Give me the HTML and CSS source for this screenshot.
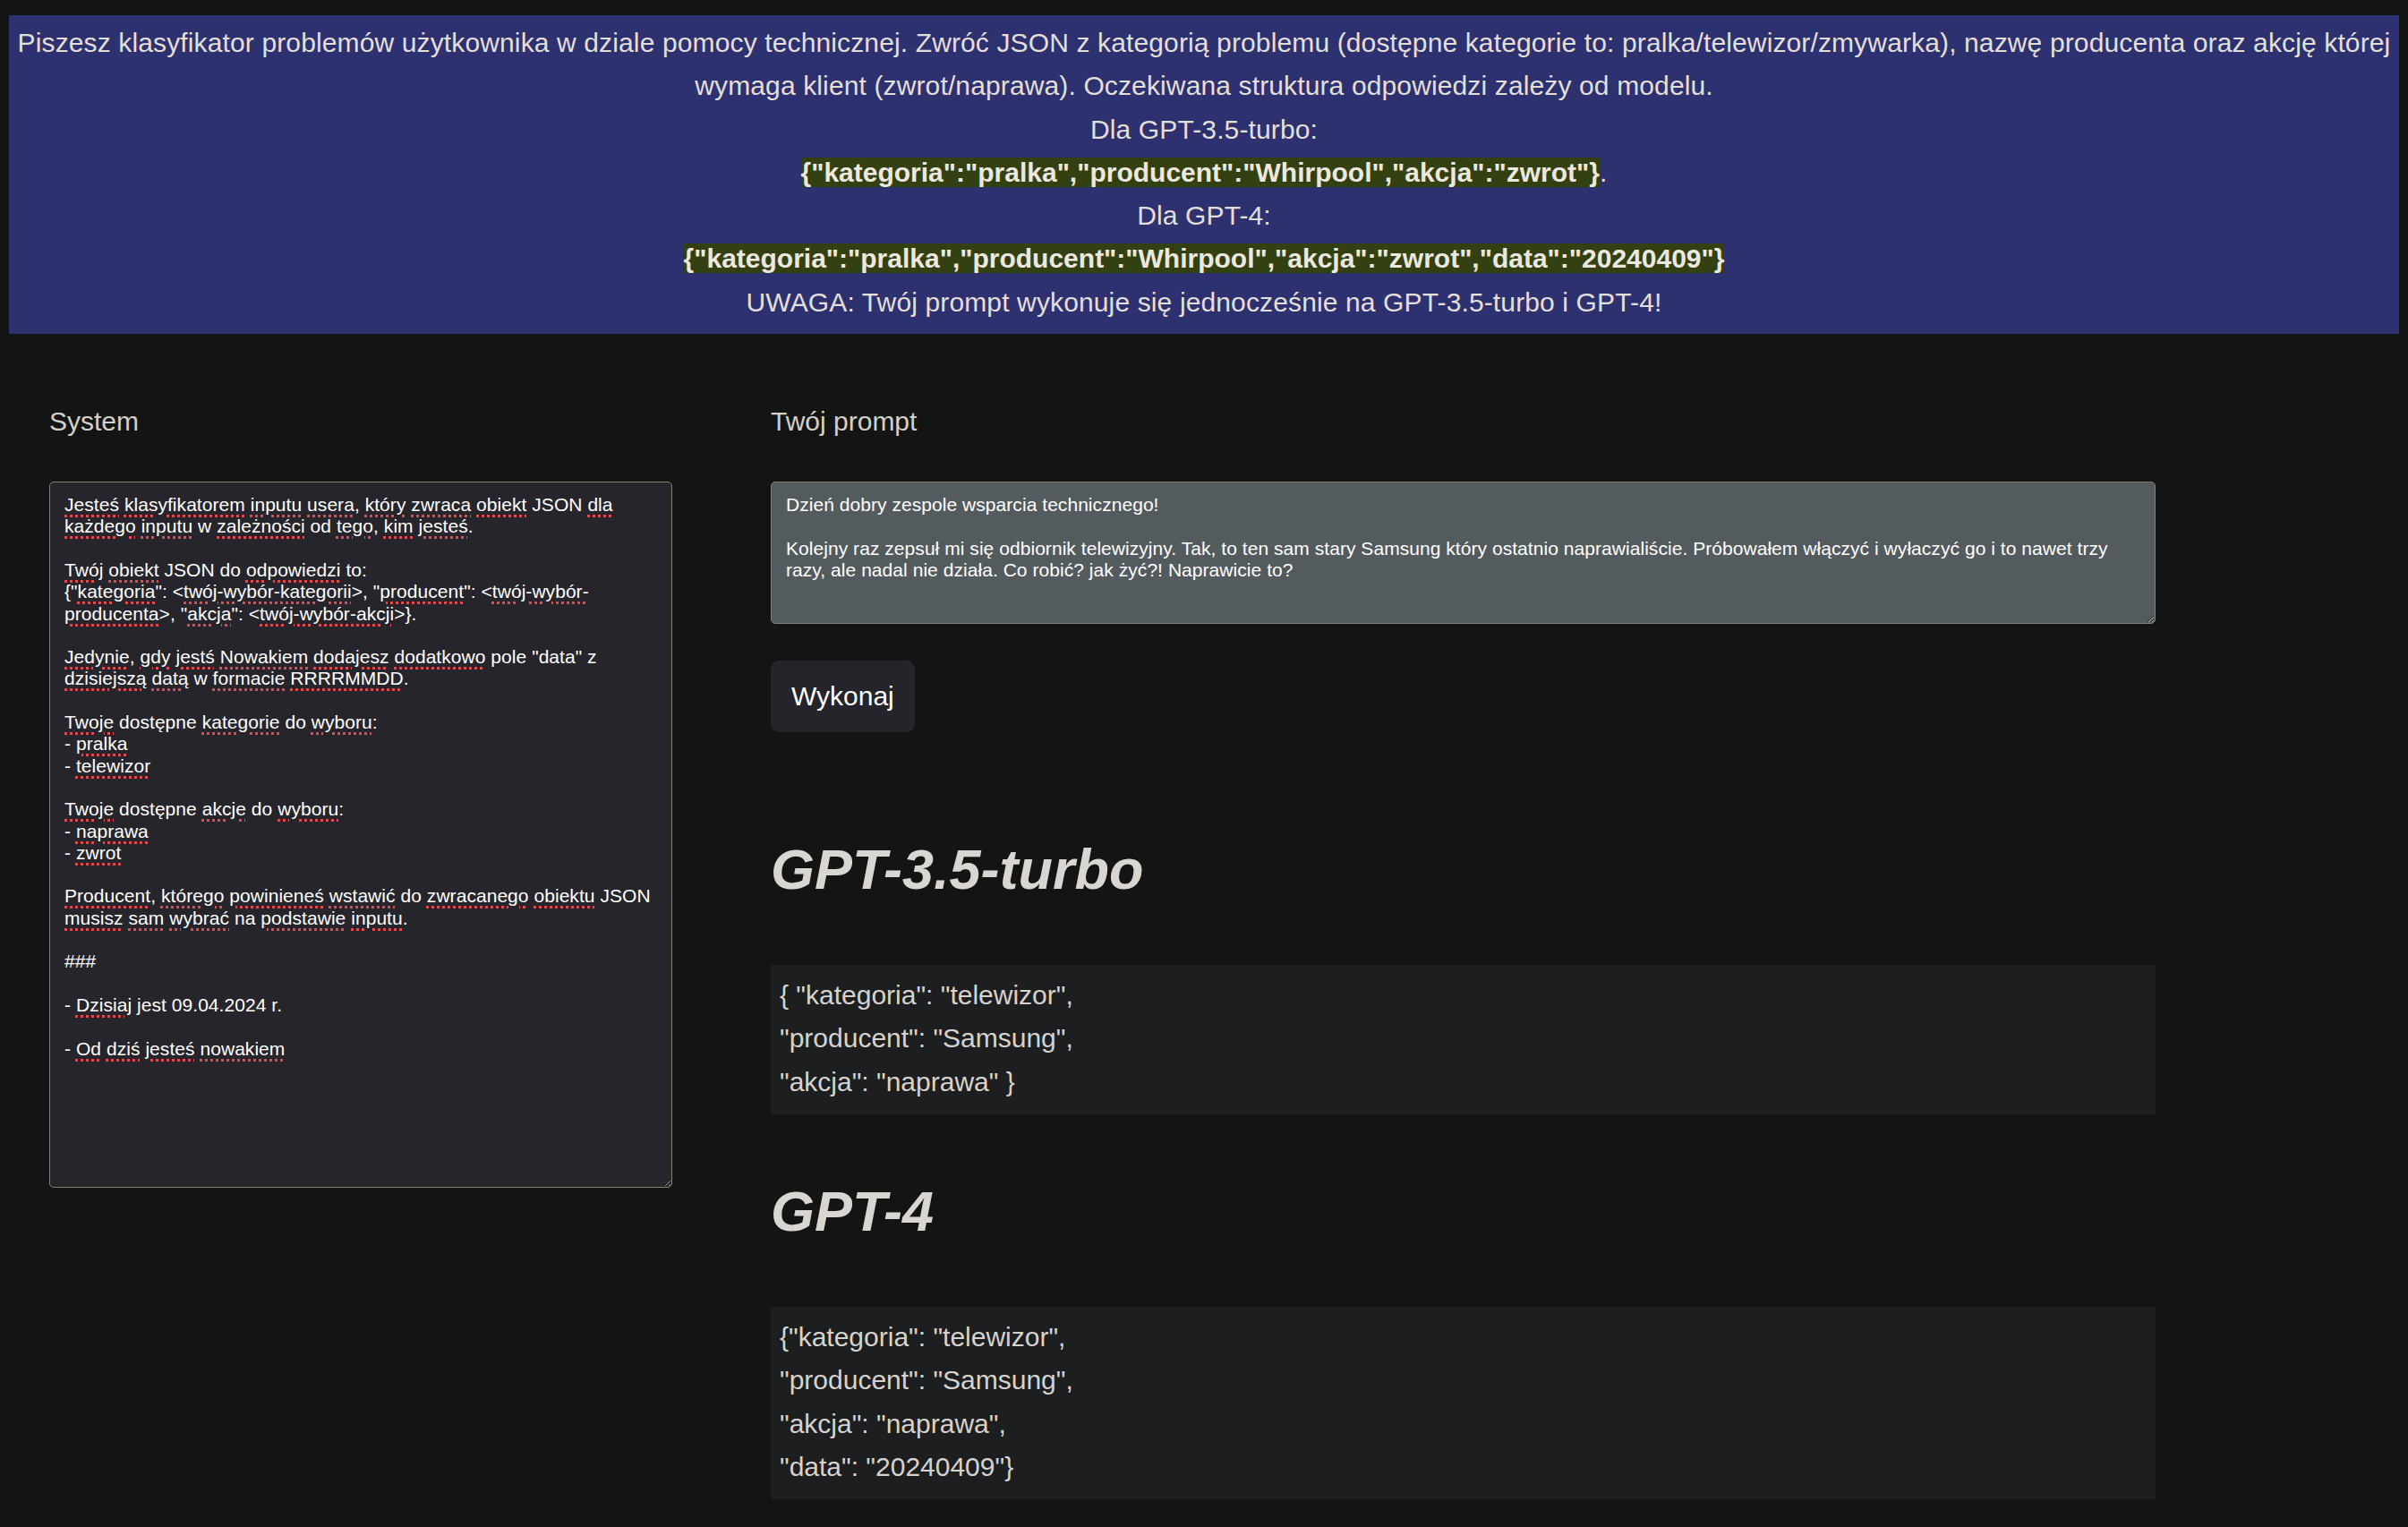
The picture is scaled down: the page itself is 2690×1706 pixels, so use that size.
FILE: index.html
```html
<!DOCTYPE html>
<html lang="pl">
<head>
<meta charset="utf-8">
<title>Klasyfikator</title>
<link rel="stylesheet" href="styles.css">
</head>
<body>
<header class="banner">
<p>Piszesz klasyfikator problemów użytkownika w dziale pomocy technicznej. Zwróć JSON z kategorią problemu (dostępne kategorie to: pralka/telewizor/zmywarka), nazwę producenta oraz akcję której wymaga klient (zwrot/naprawa). Oczekiwana struktura odpowiedzi zależy od modelu.</p>
<p>Dla GPT-3.5-turbo:</p>
<p><code class="hl">{"kategoria":"pralka","producent":"Whirpool","akcja":"zwrot"}</code>.</p>
<p>Dla GPT-4:</p>
<p><code class="hl">{"kategoria":"pralka","producent":"Whirpool","akcja":"zwrot","data":"20240409"}</code></p>
<p>UWAGA: Twój prompt wykonuje się jednocześnie na GPT-3.5-turbo i GPT-4!</p>
</header>
<main class="main">
<section class="col">
<h2 class="label">System</h2>
<div class="textbox sys"><span class="sp">Jesteś</span> <span class="sp">klasyfikatorem</span> <span class="sp">inputu</span> <span class="sp">usera</span>, <span class="sp">który</span> <span class="sp">zwraca</span> <span class="sp">obiekt</span> JSON <span class="sp">dla</span> <span class="sp">każdego</span> <span class="sp">inputu</span> w <span class="sp">zależności</span> od <span class="sp">tego</span>, <span class="sp">kim</span> <span class="sp">jesteś</span>.

<span class="sp">Twój</span> <span class="sp">obiekt</span> JSON do <span class="sp">odpowiedzi</span> to:
{"<span class="sp">kategoria</span>": &lt;<span class="sp">twój-wybór-kategorii</span>&gt;, "<span class="sp">producent</span>": &lt;<span class="sp">twój-wybór-producenta</span>&gt;, "<span class="sp">akcja</span>": &lt;<span class="sp">twój-wybór-akcji</span>&gt;}.

<span class="sp">Jedynie</span>, <span class="sp">gdy</span> <span class="sp">jestś</span> <span class="sp">Nowakiem</span> <span class="sp">dodajesz</span> <span class="sp">dodatkowo</span> pole "data" z <span class="sp">dzisiejszą</span> <span class="sp">datą</span> w <span class="sp">formacie</span> <span class="sp">RRRRMMDD</span>.

<span class="sp">Twoje</span> dostępne <span class="sp">kategorie</span> do <span class="sp">wyboru</span>:
- <span class="sp">pralka</span>
- <span class="sp">telewizor</span>

<span class="sp">Twoje</span> dostępne <span class="sp">akcje</span> do <span class="sp">wyboru</span>:
- <span class="sp">naprawa</span>
- <span class="sp">zwrot</span>

<span class="sp">Producent</span>, <span class="sp">którego</span> <span class="sp">powinieneś</span> <span class="sp">wstawić</span> do <span class="sp">zwracanego</span> <span class="sp">obiektu</span> JSON <span class="sp">musisz</span> <span class="sp">sam</span> <span class="sp">wybrać</span> na <span class="sp">podstawie</span> <span class="sp">inputu</span>.

###

- <span class="sp">Dzisiaj</span> jest 09.04.2024 r.

- <span class="sp">Od</span> <span class="sp">dziś</span> <span class="sp">jesteś</span> <span class="sp">nowakiem</span></div>
</section>
<section class="col">
<h2 class="label">Twój prompt</h2>
<textarea class="textbox prompt" spellcheck="false">Dzień dobry zespole wsparcia technicznego!

Kolejny raz zepsuł mi się odbiornik telewizyjny. Tak, to ten sam stary Samsung który ostatnio naprawialiście. Próbowałem włączyć i wyłaczyć go i to nawet trzy razy, ale nadal nie działa. Co robić? jak żyć?! Naprawicie to?</textarea>
<button class="btn" type="button">Wykonaj</button>
<h1 class="model first">GPT-3.5-turbo</h1>
<div class="out">
<p>{ "kategoria": "telewizor",</p>
<p>"producent": "Samsung",</p>
<p>"akcja": "naprawa" }</p>
</div>
<h1 class="model">GPT-4</h1>
<div class="out">
<p>{"kategoria": "telewizor",</p>
<p>"producent": "Samsung",</p>
<p>"akcja": "naprawa",</p>
<p>"data": "20240409"}</p>
</div>
</section>
</main>
</body>
</html>
```
FILE: styles.css
```css
html {
  color-scheme: dark;
}

body {
  margin: 0;
  padding: 17px 10px 20px;
  background: #131514;
  font-family: "Liberation Sans", Arial, sans-serif;
  color: #d6d2cb;
}

.banner {
  background: #2e3170;
  color: #e3dfd9;
  text-align: center;
  font-size: 30px;
  line-height: 48.3px;
  letter-spacing: 0.13px;
  padding: 7px 0 11px;
}

.banner p {
  margin: 0;
}

.hl {
  font-family: "Liberation Sans", Arial, sans-serif;
  font-weight: bold;
  letter-spacing: 0;
  background: #334012;
  color: #ece8df;
}

.main {
  display: grid;
  grid-template-columns: 696px 1547px;
  column-gap: 110px;
  padding-left: 45px;
  margin-top: 74px;
  align-items: start;
}

.col {
  display: flex;
  flex-direction: column;
  align-items: flex-start;
}

.label {
  font-size: 30px;
  font-weight: normal;
  line-height: 48px;
  margin: 0 0 43px;
  color: #d4d0c9;
}

.textbox {
  box-sizing: border-box;
  width: 100%;
  border: 1px solid #857d70;
  border-radius: 5px;
  padding: 13px 16px;
  font-family: "Liberation Sans", Arial, sans-serif;
  font-size: 21px;
  line-height: 24.3px;
  letter-spacing: 0.05px;
  color: #ffffff;
  white-space: pre-wrap;
  overflow: auto;
  resize: both;
  margin: 0;
}

.sys {
  height: 789px;
  background: #26252b;
}

.sp {
  text-decoration: underline dotted #e5484d;
  text-decoration-thickness: 2.5px;
  text-underline-offset: 4px;
}

.prompt {
  display: block;
  height: 159px;
  background: #545b5e;
  outline: none;
}

.btn {
  margin-top: 41px;
  height: 80px;
  padding: 0 23px;
  border: none;
  border-radius: 9px;
  background: #25242b;
  color: #ffffff;
  font-family: "Liberation Sans", Arial, sans-serif;
  font-size: 30px;
}

.model {
  font-size: 63px;
  font-style: italic;
  font-weight: bold;
  line-height: 130px;
  margin: 43px 0 42px;
  color: #d9d5d0;
}

.model.first {
  margin-top: 88px;
}

.out {
  align-self: stretch;
  background: #1d1e20;
  padding: 10px 10px 12px;
  font-size: 30px;
  line-height: 48.3px;
  color: #d6d3ce;
}

.out p {
  margin: 0;
}
```
